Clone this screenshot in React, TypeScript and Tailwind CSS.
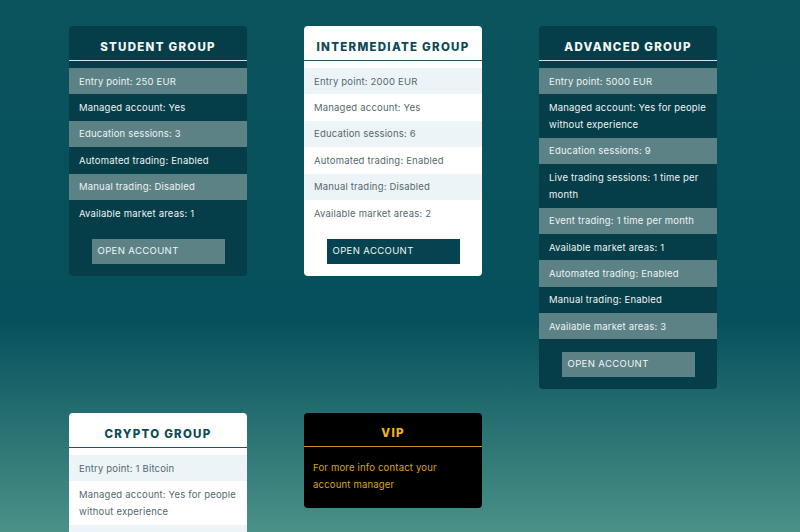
import React from "react";

type Variant = "dark" | "light";

const cards: { title: string; variant: Variant; rows: string[] }[] = [
  {
    title: "STUDENT GROUP",
    variant: "dark",
    rows: [
      "Entry point: 250 EUR",
      "Managed account: Yes",
      "Education sessions: 3",
      "Automated trading: Enabled",
      "Manual trading: Disabled",
      "Available market areas: 1",
    ],
  },
  {
    title: "INTERMEDIATE GROUP",
    variant: "light",
    rows: [
      "Entry point: 2000 EUR",
      "Managed account: Yes",
      "Education sessions: 6",
      "Automated trading: Enabled",
      "Manual trading: Disabled",
      "Available market areas: 2",
    ],
  },
  {
    title: "ADVANCED GROUP",
    variant: "dark",
    rows: [
      "Entry point: 5000 EUR",
      "Managed account: Yes for people without experience",
      "Education sessions: 9",
      "Live trading sessions: 1 time per month",
      "Event trading: 1 time per month",
      "Available market areas: 1",
      "Automated trading: Enabled",
      "Manual trading: Enabled",
      "Available market areas: 3",
    ],
  },
  {
    title: "CRYPTO GROUP",
    variant: "light",
    rows: [
      "Entry point: 1 Bitcoin",
      "Managed account: Yes for people without experience",
      "Education sessions: 3",
      "Automated trading: Enabled",
      "Manual trading: Enabled",
    ],
  },
];

const bodyFont = { fontFamily: "Inter, 'Noto Sans', sans-serif" };

function Card({ title, variant, rows }: { title: string; variant: Variant; rows: string[] }) {
  const dark = variant === "dark";
  return (
    <div
      className={`w-[178px] rounded-[4px] overflow-hidden pb-[12px] ${
        dark ? "bg-[#053e48]" : "bg-white"
      }`}
    >
      <div
        className={`h-[35px] flex items-center justify-center border-b-[1.5px] ${
          dark ? "border-[#d4e4e4]" : "border-[#28505a]"
        }`}
      >
        <span
          className={`text-[11.5px] font-extrabold tracking-[0.11em] pt-[9px] ${
            dark ? "text-[#f2f6f6]" : "text-[#0d4a55]"
          }`}
          style={{ fontFamily: "Inter, 'Noto Sans', sans-serif" }}
        >
          {title}
        </span>
      </div>
      <div className="mt-[7px] flex flex-col">
        {rows.map((r, i) => (
          <div
            key={i}
            className={`px-[10px] py-[4.7px] text-[9.5px] leading-[17px] tracking-[0.02em] ${
              dark
                ? i % 2 === 0
                  ? "bg-[#5c8286] text-[#eef3f3]"
                  : "text-[#eef3f3]"
                : i % 2 === 0
                ? "bg-[#ecf4f8] text-[#53696d]"
                : "text-[#53696d]"
            }`}
            style={bodyFont}
          >
            {r}
          </div>
        ))}
      </div>
      <div className="mt-[12.5px] flex justify-center">
        <button
          className={`w-[133px] h-[25px] text-left pl-[6px] text-[9.5px] tracking-[0.04em] ${
            dark ? "bg-[#5c8286] text-[#f0f5f5]" : "bg-[#064350] text-[#f0f5f5]"
          }`}
          style={bodyFont}
        >
          OPEN ACCOUNT
        </button>
      </div>
    </div>
  );
}

function VipCard() {
  return (
    <div className="w-[178px] h-[95px] rounded-[4px] bg-black">
      <div className="h-[34px] flex items-center justify-center border-b-[1.5px] border-[#c8961c]">
        <span
          className="text-[11.5px] font-extrabold tracking-[0.11em] pt-[8px] text-[#f2b51e]"
          style={{ fontFamily: "Inter, 'Noto Sans', sans-serif" }}
        >
          VIP
        </span>
      </div>
      <div
        className="px-[9px] pt-[12px] text-[9.5px] leading-[17px] tracking-[0.02em] text-[#dba51f] pr-[20px]"
        style={bodyFont}
      >
        For more info contact your account manager
      </div>
    </div>
  );
}

export default function App() {
  return (
    <div className="w-[800px] h-[532px] overflow-hidden bg-[linear-gradient(180deg,#0b545e_0px,#05505c_320px,#4b9188_532px)]">
      <div className="pl-[69px] pt-[26px] grid grid-cols-[178px_178px_178px] gap-x-[57px] gap-y-[24px] items-start">
        <Card {...cards[0]} />
        <Card {...cards[1]} />
        <Card {...cards[2]} />
        <Card {...cards[3]} />
        <VipCard />
      </div>
    </div>
  );
}
